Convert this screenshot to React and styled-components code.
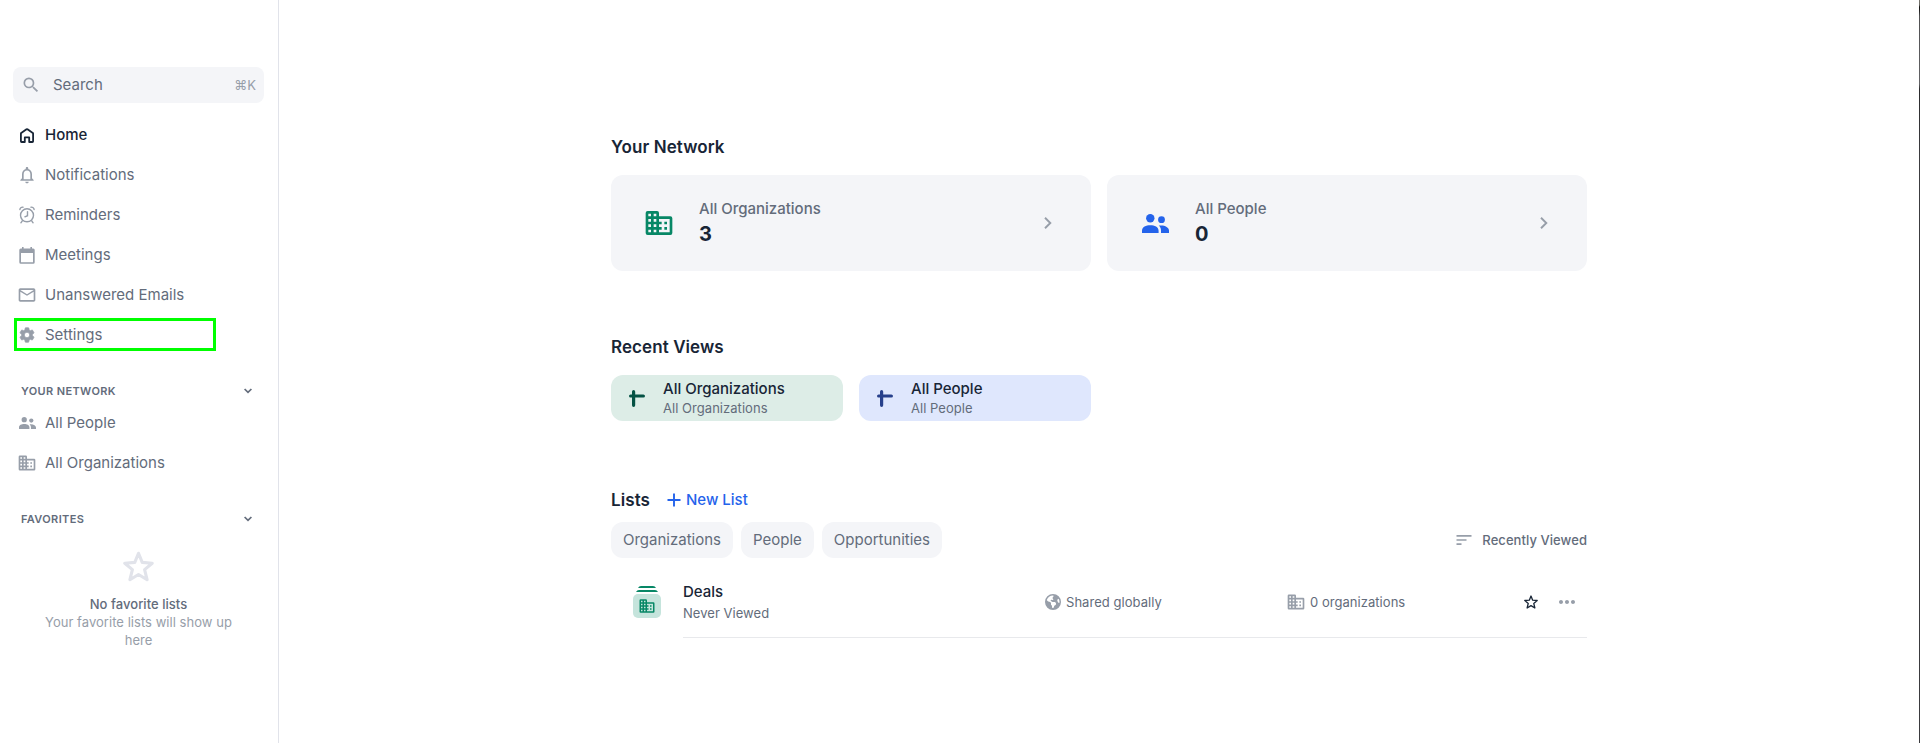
import React from 'react';
import styled, { createGlobalStyle } from 'styled-components';
import { MdSearch, MdNotificationsNone, MdMailOutline, MdSettings, MdSort, MdMoreHoriz } from 'react-icons/md';
import { FaEarthAmericas } from 'react-icons/fa6';

const ink = '#182536';
const slate = '#636c7b';
const mute = '#979ea9';
const fog = '#f4f5f8';
const line = '#e1e3ea';

const GlobalStyle = createGlobalStyle`
  * { box-sizing: border-box; }
  body { margin: 0; background: #fff; font-family: Inter, "Liberation Sans", sans-serif; color: ${ink}; }
  svg { display: block; flex: none; }
`;

const Page = styled.div`
  display: flex;
  height: 743px;
  overflow: hidden;
`;
const Sidebar = styled.aside`
  flex: none;
  width: 279px;
  padding: 67px 14px 0 13px;
  border-right: 1px solid ${line};
`;
const SearchBox = styled.div`
  display: flex;
  align-items: center;
  width: 251px;
  height: 36px;
  padding: 0 8px;
  border-radius: 8px;
  background: ${fog};
  color: ${mute};
`;
const SearchLabel = styled.span`
  flex: 1;
  margin-left: 12px;
  padding-bottom: 2px;
  font-size: 15px;
  color: ${slate};
`;
const Shortcut = styled.span`
  font-size: 13px;
`;
const Nav = styled.nav`
  display: flex;
  flex-direction: column;
  gap: 7px;
  margin-top: ${p => p.$top}px;
`;
const NavItem = styled.a`
  display: flex;
  align-items: center;
  width: 202px;
  height: 33px;
  margin-left: 1px;
  padding: 1px 0 0 3px;
  font-size: 15px;
  font-weight: ${p => (p.$active ? 500 : 400)};
  color: ${p => (p.$active ? ink : slate)};
  outline: ${p => (p.$marked ? '3px solid #00ff00' : 'none')};
  outline-offset: -3px;
`;
const NavIcon = styled.span`
  display: flex;
  justify-content: center;
  width: 20px;
  margin-right: 8px;
  color: ${p => (p.$active ? ink : mute)};
`;
const Gear = styled(MdSettings)`
  path:not([fill="none"]) {
    stroke: currentColor;
    stroke-width: 1px;
  }
`;
const NavLabel = styled.span`
  padding-bottom: 2px;
`;
const GroupHead = styled.div`
  display: flex;
  justify-content: space-between;
  align-items: center;
  height: 20px;
  margin-top: ${p => p.$top}px;
  padding: 0 12px 0 8px;
  font-size: 11px;
  font-weight: 600;
  letter-spacing: 0.36px;
  color: ${slate};
`;
const Empty = styled.div`
  display: flex;
  flex-direction: column;
  align-items: center;
  width: 251px;
  margin-top: 22px;
  padding: 0 25px;
  font-size: 13px;
  line-height: 18px;
  letter-spacing: 0.04px;
  text-align: center;
  color: ${mute};
`;
const EmptyTitle = styled.div`
  margin-top: 13px;
  font-weight: 500;
  color: ${slate};
`;
const Main = styled.main`
  flex: 1;
  padding: 132px 0 0 332px;
`;
const Content = styled.div`
  width: 976px;
`;
const Edge = styled.div`
  flex: none;
  width: 1px;
  background: linear-gradient(#77756f 0, #6b6963 5px, #111 7px, #222 11px, #505052 16px, #626265 84px, #2a2a2c 89px, #3c3c40 160px, #3a3a3e 100%);
`;
const Title = styled.h2`
  margin: 0;
  font-size: 17px;
  font-weight: 600;
  line-height: 30px;
  letter-spacing: 0.08px;
  color: ${ink};
`;
const CardRow = styled.div`
  display: flex;
  gap: 16px;
  margin-top: 13px;
`;
const NetworkCard = styled.div`
  display: flex;
  align-items: center;
  width: 480px;
  height: 96px;
  padding: 0 39px 0 32px;
  border-radius: 12px;
  background: ${fog};
`;
const CardIcon = styled.span`
  display: flex;
  justify-content: center;
  width: 32px;
  margin-right: 24px;
  color: ${p => p.$color};
`;
const CardText = styled.div`
  flex: 1;
  padding-bottom: 2px;
  font-size: 15px;
  font-weight: 500;
  line-height: 24px;
  color: ${slate};
`;
const Count = styled.div`
  font-size: 20px;
  font-weight: 700;
  line-height: 26px;
  color: ${ink};
`;
const Section = styled.section`
  margin-top: ${p => p.$top}px;
`;
const ViewCard = styled.div`
  display: flex;
  align-items: center;
  width: 232px;
  height: 46px;
  padding-left: 18px;
  border-radius: 12px;
  background: ${p => p.$bg};
  color: ${p => p.$color};
`;
const ViewText = styled.div`
  margin-left: 18px;
  font-size: 13px;
  line-height: 20px;
  letter-spacing: 0.04px;
  color: ${slate};
`;
const Strong = styled.div`
  padding-top: 1px;
  font-size: 15px;
  font-weight: 500;
  line-height: 19px;
  letter-spacing: 0;
  color: ${ink};
`;
const ListsHead = styled.div`
  display: flex;
  align-items: center;
`;
const NewList = styled.a`
  display: flex;
  align-items: center;
  gap: 5px;
  margin-left: 17px;
  font-size: 15px;
  font-weight: 500;
  line-height: 20px;
  color: #2463eb;
  span { padding-bottom: 1px; }
`;
const Filters = styled.div`
  display: flex;
  align-items: center;
  gap: 8px;
  margin-top: 7px;
`;
const Chip = styled.button`
  height: 36px;
  padding: 0 12px 2px;
  border: 0;
  border-radius: 12px;
  background: ${fog};
  font: 400 15px Inter, sans-serif;
  color: ${slate};
`;
const Sort = styled.div`
  display: flex;
  align-items: center;
  gap: 8px;
  margin-left: auto;
  font-size: 13px;
  font-weight: 500;
  letter-spacing: 0.06px;
  color: ${slate};
  svg { color: ${mute}; }
`;
const ListRow = styled.div`
  display: grid;
  grid-template-columns: 50px 362px 241px 1fr auto auto;
  align-items: center;
  height: 79px;
  padding: 9px 0 0 22px;
`;
const ListLine = styled.div`
  height: 1px;
  margin-left: 72px;
  background: #e8e9ec;
`;
const ListName = styled.div`
  font-size: 13px;
  line-height: 20px;
`;
const NeverViewed = styled.div`
  margin-top: 2px;
  letter-spacing: 0.04px;
  color: ${slate};
`;
const Meta = styled.div`
  display: flex;
  align-items: center;
  gap: ${p => p.$gap}px;
  font-size: 13px;
  letter-spacing: 0.04px;
  color: ${slate};
  svg { color: ${mute}; }
`;
const Action = styled.span`
  display: flex;
  margin-right: ${p => p.$right}px;
  color: ${p => p.$color};
`;

const Building = ({ size = 20 }) => (
  <svg width={size} height={size} viewBox="0 0 24 24" fill="currentColor">
    <path d="M12 7V4.500Q12 3 10.500 3H3.500Q2 3 2 4.500V19.500Q2 21 3.500 21H20.500Q22 21 22 19.500V8.500Q22 7 20.500 7H12zM6 19H4v-2h2v2zm0-4H4v-2h2v2zm0-4H4V9h2v2zm0-4H4V5h2v2zm4 12H8v-2h2v2zm0-4H8v-2h2v2zm0-4H8V9h2v2zm0-4H8V5h2v2zm10 12h-8v-2h2v-2h-2v-2h2v-2h-2V9h8v10zm-2-8h-2v2h2v-2zm0 4h-2v2h2v-2z" />
  </svg>
);
const People = ({ width = 17 }) => (
  <svg width={width} height={(width * 19) / 27} viewBox="0 0 27 19" fill="currentColor">
    <circle cx="8.300" cy="4.200" r="4.200" />
    <circle cx="19.500" cy="5.700" r="3.400" />
    <path d="M0 19v-2.300c0-3.600 4-5.400 8.300-5.400s8.300 1.800 8.300 5.400V19zM19 19v-2.400c0-2-.8-3.700-2.200-5 5.200-.8 10.200 1.300 10.200 5V19z" />
  </svg>
);
const Home = () => (
  <svg width="14" height="15" viewBox="0 0 14 15" fill="none" stroke="currentColor" strokeWidth="1.800" strokeLinejoin="round">
    <path d="M.9 5.700Q.9 5.300 1.200 5L6.500 1.200Q7 .9 7.500 1.200L12.800 5Q13.100 5.300 13.100 5.700V13.300Q13.100 14 12.400 14H9.200V9.400H4.800V14H1.600Q.9 14 .9 13.300z" />
  </svg>
);
const Alarm = () => (
  <svg width="16" height="18" viewBox="0 0 16 18" fill="none" stroke="currentColor" strokeWidth="1.400" strokeLinecap="round">
    <circle cx="8" cy="9.300" r="6.500" />
    <path d="M8.500 5.600V9.700L5.900 10.800M.9 3.500C1 2 2.300 1 4 1.200M15.100 3.500C15 2 13.700 1 12 1.200M3.300 14.800L1.900 16.800M12.700 14.800L14.100 16.800" />
  </svg>
);
const Calendar = () => (
  <svg width="16" height="17" viewBox="0 0 16 17" fill="currentColor">
    <path fillRule="evenodd" d="M3 0H4.600V1.600H11.400V0H13V1.600H14.200Q15.700 1.600 15.700 3.100V15.300Q15.700 16.800 14.200 16.800H1.800Q.3 16.800 .3 15.300V3.100Q.3 1.600 1.800 1.600H3zM2 6V15.200H14V6z" />
  </svg>
);
const Down = () => (
  <svg width="8" height="6" viewBox="0 0 8 6" fill="none" stroke="currentColor" strokeWidth="1.700">
    <path d="M.6 1L4 4.400L7.400 1" />
  </svg>
);
const Right = () => (
  <svg width="8" height="12" viewBox="0 0 8 12" fill="none" stroke={mute} strokeWidth="1.900">
    <path d="M1 .8L6.300 6L1 11.200" />
  </svg>
);
const Star = ({ size, weight }) => (
  <svg width={size} height={size} viewBox="0 0 30 30" fill="none" stroke="currentColor" strokeWidth={weight} strokeLinejoin="round">
    <path d="M15 2.200L18.600 11L28.300 11.800L20.900 18L23.300 27.800L15 22.700L6.700 27.800L9.100 18L1.700 11.800L11.400 11z" />
  </svg>
);
const ViewMark = () => (
  <svg width="16" height="17" viewBox="0 0 16 17" fill="none" stroke="currentColor" strokeWidth="3.200" strokeLinecap="round">
    <path d="M4.600 1.700V15.300M1.600 6H14.400" />
  </svg>
);
const Plus = () => (
  <svg width="14" height="14" viewBox="0 0 14 14" stroke="currentColor" strokeWidth="1.900">
    <path d="M7 .5V13.500M.5 7H13.500" />
  </svg>
);
const Deck = styled.div`
  display: flex;
  flex-direction: column;
  align-items: center;
  width: 28px;
  color: #078766;
`;
const DeckTile = styled.div`
  display: flex;
  justify-content: center;
  align-items: center;
  width: 28px;
  height: 24px;
  margin-top: 2px;
  border-radius: 5px;
  background: #c5e4dc;
`;

const primary = [
  ['Home', <Home />],
  ['Notifications', <MdNotificationsNone size={20} />],
  ['Reminders', <Alarm />],
  ['Meetings', <Calendar />],
  ['Unanswered Emails', <MdMailOutline size={20} />],
  ['Settings', <Gear size={18} />],
];
const network = [
  ['All People', <People />],
  ['All Organizations', <Building />],
];

const Links = ({ items, top }) => (
  <Nav $top={top}>
    {items.map(([label, icon]) => (
      <NavItem key={label} $active={label === 'Home'} $marked={label === 'Settings'}>
        <NavIcon $active={label === 'Home'}>{icon}</NavIcon>
        <NavLabel>{label}</NavLabel>
      </NavItem>
    ))}
  </Nav>
);

export default function App() {
  return (
    <Page>
      <GlobalStyle />
      <Sidebar>
        <SearchBox>
          <MdSearch size={20} />
          <SearchLabel>Search</SearchLabel>
          <Shortcut>⌘K</Shortcut>
        </SearchBox>
        <Links items={primary} top={15} />
        <GroupHead $top={30}>YOUR NETWORK<Down /></GroupHead>
        <Links items={network} top={5} />
        <GroupHead $top={30}>FAVORITES<Down /></GroupHead>
        <Empty>
          <Action $color={line} $right={0}><Star size={31} weight={3} /></Action>
          <EmptyTitle>No favorite lists</EmptyTitle>
          <div>Your favorite lists will show up here</div>
        </Empty>
      </Sidebar>
      <Main>
        <Content>
          <Title>Your Network</Title>
          <CardRow>
            <NetworkCard>
              <CardIcon $color="#078766"><Building size={32} /></CardIcon>
              <CardText>All Organizations<Count>3</Count></CardText>
              <Right />
            </NetworkCard>
            <NetworkCard>
              <CardIcon $color="#2463eb"><People width={27} /></CardIcon>
              <CardText>All People<Count>0</Count></CardText>
              <Right />
            </NetworkCard>
          </CardRow>
          <Section $top={61}>
            <Title>Recent Views</Title>
            <CardRow>
              <ViewCard $bg="#ddede7" $color="#045244">
                <ViewMark />
                <ViewText><Strong>All Organizations</Strong>All Organizations</ViewText>
              </ViewCard>
              <ViewCard $bg="#dfe7fd" $color="#27408b">
                <ViewMark />
                <ViewText><Strong>All People</Strong>All People</ViewText>
              </ViewCard>
            </CardRow>
          </Section>
          <Section $top={64}>
            <ListsHead>
              <Title>Lists</Title>
              <NewList><Plus /><span>New List</span></NewList>
            </ListsHead>
            <Filters>
              <Chip>Organizations</Chip>
              <Chip>People</Chip>
              <Chip>Opportunities</Chip>
              <Sort><MdSort size={20} />Recently Viewed</Sort>
            </Filters>
            <ListRow>
              <Deck>
                <svg width="22" height="6" viewBox="0 0 22 6" fill="currentColor">
                  <path d="M2 2Q3 0 5 0H17Q19 0 20 2zM0 6Q1 4 3 4H19Q21 4 22 6z" />
                </svg>
                <DeckTile><Building size={18} /></DeckTile>
              </Deck>
              <ListName><Strong>Deals</Strong><NeverViewed>Never Viewed</NeverViewed></ListName>
              <Meta $gap={5}><FaEarthAmericas size={16} />Shared globally</Meta>
              <Meta $gap={4}><Building />0 organizations</Meta>
              <Action $color={ink} $right={17}><Star size={14} weight={2.8} /></Action>
              <Action $color={mute} $right={8}><MdMoreHoriz size={24} /></Action>
            </ListRow>
            <ListLine />
          </Section>
        </Content>
      </Main>
      <Edge />
    </Page>
  );
}
